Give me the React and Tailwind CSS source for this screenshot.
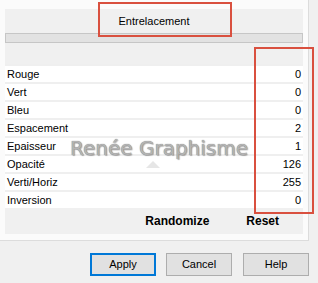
import React from 'react';

const rows = [
  { label: 'Rouge', value: 0 },
  { label: 'Vert', value: 0 },
  { label: 'Bleu', value: 0 },
  { label: 'Espacement', value: 2 },
  { label: 'Epaisseur', value: 1 },
  { label: 'Opacité', value: 126 },
  { label: 'Verti/Horiz', value: 255 },
  { label: 'Inversion', value: 0 },
];

const App = () => {
  return (
    <div className="relative w-[318px] h-[283px] bg-[#f0f0f0] overflow-hidden font-['Liberation_Sans',Arial,sans-serif] text-[11px] text-black">
      {/* scroll view */}
      <div className="w-[309px] h-[241px] bg-[#fbfbfb] border-r border-b border-[#dcdcdc] pl-[5px] pt-[9px]">
        <div className="w-[298px] h-[225px] bg-[#f0f0f0] flex flex-col">
          <div className="h-[24px] flex items-center justify-center">Entrelacement</div>
          <div className="h-[10px] border border-[#c6c6c6] bg-[#e2e2e2]" />
          <div className="h-[21px]" />
          <div className="flex flex-col">
            {rows.map((r) => (
              <div
                key={r.label}
                className="h-[18px] bg-white border-t-2 border-[#efefef] flex items-center justify-between pl-[2px] pr-[2px]"
              >
                <span>{r.label}</span>
                <span>{r.value}</span>
              </div>
            ))}
          </div>
          <div className="flex-1 flex items-center justify-end gap-[37px] pr-[24px] font-bold text-[12px]">
            <span>Randomize</span>
            <span>Reset</span>
          </div>
        </div>
      </div>

      {/* dialog buttons */}
      <div className="flex justify-end gap-[10px] pr-[9px] pt-[12px]">
        <button className="w-[66px] h-[23px] bg-[#e1e1e1] border-2 border-[#0078d7] flex items-center justify-center">
          Apply
        </button>
        <button className="w-[66px] h-[23px] bg-[#e1e1e1] border border-[#adadad] flex items-center justify-center">
          Cancel
        </button>
        <button className="w-[66px] h-[23px] bg-[#e1e1e1] border border-[#adadad] flex items-center justify-center ml-[1px]">
          Help
        </button>
      </div>

      {/* watermark */}
      <div className="absolute left-[70px] top-[136px] font-['DejaVu_Sans',Verdana,sans-serif] text-[20px] leading-[24px] text-[#b4b4b4] [text-shadow:0_0_1px_#6f6f6f,1px_1px_1px_rgba(0,0,0,0.3)] pointer-events-none">
        Renée Graphisme
      </div>
      <div className="absolute left-[146px] top-[161px] w-0 h-0 border-l-[7px] border-r-[7px] border-b-[7px] border-l-transparent border-r-transparent border-b-[#e6e6e6]" />

      {/* red annotation boxes */}
      <div className="absolute left-[98px] top-[2px] w-[134px] h-[35px] border-2 border-[#d9503f]" />
      <div className="absolute left-[254px] top-[47px] w-[60px] h-[167px] border-2 border-[#d9503f]" />
    </div>
  );
};

export default App;
